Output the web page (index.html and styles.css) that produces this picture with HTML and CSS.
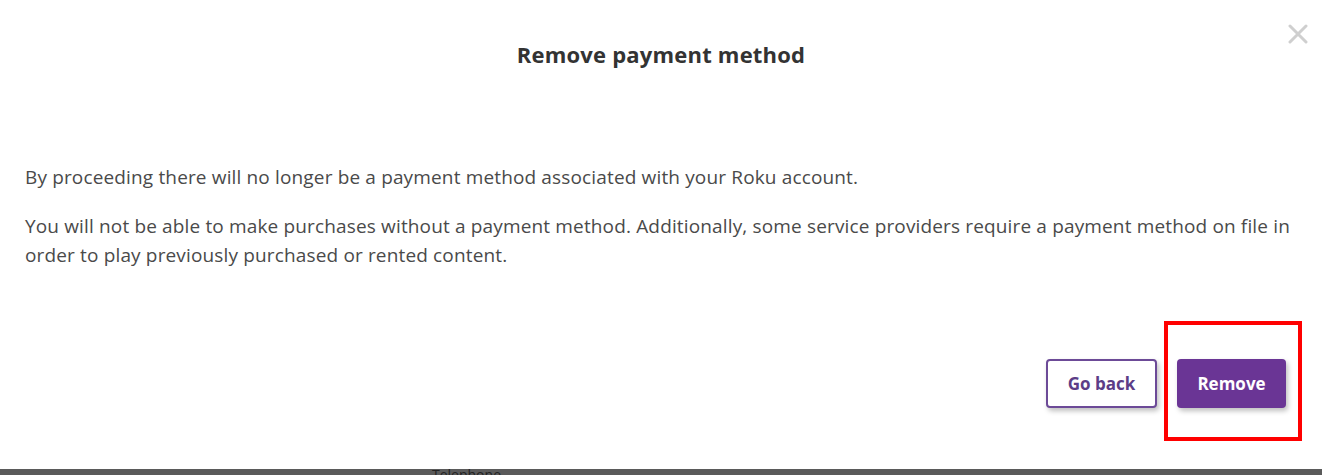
FILE: index.html
```html
<!DOCTYPE html>
<html lang="en">
<head>
    <meta charset="utf-8" />
    <title>Remove payment method</title>
	<link rel="stylesheet" href="styles.css">
</head>
<body>
	<div class="modal">
		<div class="modal-head">
			<h2 class="modal-title">Remove payment method</h2>
			<button class="close" aria-label="Close">
				<svg width="20" height="20" viewBox="0 0 20 20"><path d="M2 2 L18 18 M18 2 L2 18" stroke="#cfcfcf" stroke-width="3" stroke-linecap="round"/></svg>
			</button>
		</div>
		<div class="modal-body">
			<p>By proceeding there will no longer be a payment method associated with your Roku account.</p>
			<p>You will not be able to make purchases without a payment method. Additionally, some service providers require a payment method on file in order to play previously purchased or rented content.</p>
		</div>
		<div class="modal-foot">
			<button class="btn btn-outline">Go back</button>
			<div class="highlight">
				<button class="btn btn-primary">Remove</button>
			</div>
		</div>
	</div>
	<div class="bottombar"><span>Telephone</span></div>
</body>
</html>
```

FILE: styles.css
```css
body {
  margin: 0;
  background: #fff;
  font-family: "Open Sans", "Noto Sans", sans-serif;
  color: #4a4a4a;
}

.modal {
  height: 469px;
  display: flex;
  flex-direction: column;
  box-sizing: border-box;
  padding: 0 0 0 25px;
}

.modal-head {
  position: relative;
  height: 110px;
  display: flex;
  justify-content: center;
  padding-right: 25px;
}

.modal-title {
  margin: 39px 0 0 0;
  font-size: 22px;
  font-weight: 700;
  color: #333;
  letter-spacing: 0.2px;
}

.close {
  position: absolute;
  right: 14px;
  top: 24px;
  background: none;
  border: none;
  padding: 0;
  cursor: pointer;
}

.modal-body {
  padding-top: 53px;
  padding-right: 30px;
}

.modal-body p {
  margin: 0 0 20px 0;
  font-size: 19px;
  line-height: 29px;
  letter-spacing: 0.15px;
}

.modal-foot {
  display: flex;
  justify-content: flex-end;
  align-items: flex-end;
  gap: 7px;
  margin-top: 31px;
  padding-right: 20px;
}

.btn {
  height: 49px;
  border-radius: 4px;
  font-family: "Open Sans", sans-serif;
  font-size: 17px;
  font-weight: 700;
  cursor: pointer;
  box-shadow: 2px 3px 5px rgba(0, 0, 0, 0.25);
}

.btn-outline {
  width: 111px;
  margin-bottom: 33px;
  background: #fff;
  border: 2px solid #6c4a97;
  color: #5c3d87;
}

.btn-primary {
  width: 109px;
  background: #6a3595;
  border: none;
  color: #fff;
}

.highlight {
  border: 4px solid #f00;
  padding: 34px 12px 29px 9px;
}

.bottombar {
  height: 6px;
  background: #5a5a5a;
  overflow: hidden;
}

.bottombar span {
  display: block;
  margin-left: 432px;
  font-size: 14px;
  line-height: 20px;
  margin-top: -4px;
  color: #222;
}
```
